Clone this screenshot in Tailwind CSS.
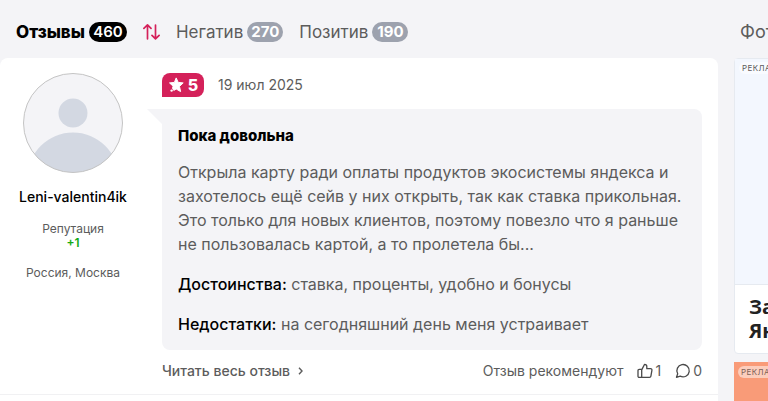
<!DOCTYPE html>
<html lang="ru">
<head>
  <meta charset="UTF-8">
  <meta name="viewport" content="width=device-width, initial-scale=1">
  <title>Отзывы</title>
  <script src="https://cdn.jsdelivr.net/npm/@tailwindcss/browser@4"></script>
</head>
<body class="min-h-screen bg-[#f4f4f7] font-['Inter','Liberation_Sans',sans-serif] text-[#5c5c5c]">

  <div class="flex min-h-screen gap-4">

    <!-- Reviews -->
    <main class="flex min-w-0 flex-1 flex-col">
      <nav class="flex h-[58px] items-center gap-4 pb-1 pt-2.5 pl-4 text-[17px] leading-6">
        <a href="#" class="flex items-center gap-1 font-extrabold text-black">Отзывы
          <span class="flex h-5 w-[38px] items-center justify-center rounded-full bg-black text-[15px] font-semibold text-white">460</span>
        </a>
        <button type="button" aria-label="Сортировка" class="flex w-[17px] justify-center">
          <svg class="h-4 w-[17px] shrink-0" viewBox="0 0 17 16" fill="none" stroke="#d4215a" stroke-width="1.7" stroke-linecap="round" stroke-linejoin="round">
            <path d="M4.500 14.800V1.200M.9 4.400l3.600-3.500L8 4.400M12.500 1v13.600M9 11.400l3.500 3.500 3.600-3.500"/>
          </svg>
        </button>
        <a href="#" class="flex items-center gap-1">Негатив
          <span class="flex h-5 w-9 items-center justify-center rounded-full bg-[#9da2ae] text-[15px] font-bold text-white">270</span>
        </a>
        <a href="#" class="flex items-center gap-1">Позитив
          <span class="flex h-5 w-9 items-center justify-center rounded-full bg-[#9da2ae] text-[15px] font-bold text-white">190</span>
        </a>
      </nav>

      <div class="flex-1 rounded-t-lg bg-white">
        <article class="flex gap-4 border-b border-[#f1f1f3] pb-3 pt-[15px] pr-4">

          <!-- Author -->
          <div class="flex w-[146px] shrink-0 flex-col items-center text-center text-xs leading-[14px]">
            <svg class="h-[100px] w-[100px]" viewBox="0 0 100 100">
              <defs><clipPath id="face"><circle cx="50" cy="50" r="49.5"/></clipPath></defs>
              <circle cx="50" cy="50" r="49.5" fill="#f4f4f7"/>
              <g clip-path="url(#face)" fill="#d3d8e2">
                <circle cx="50" cy="40" r="14.5"/>
                <circle cx="50" cy="105" r="45.500"/>
              </g>
              <circle cx="50" cy="50" r="49.5" fill="none" stroke="#c4c4c4" stroke-width="1"/>
            </svg>
            <a href="#" class="mt-3 text-sm leading-6 font-medium text-black">Leni-valentin4ik</a>
            <p class="mt-[13px]">Репутация</p>
            <p class="font-semibold text-[#14aa14]">+1</p>
            <p class="mt-4">Россия, Москва</p>
          </div>

          <div class="min-w-0 flex-1">
            <div class="flex h-6 items-center gap-3.5 text-sm">
              <span class="flex h-6 w-[42px] items-center justify-center gap-1 rounded-lg rounded-bl-none bg-[#d4215a] text-base font-extrabold text-white">
                <svg class="h-4 w-4" viewBox="0 0 16 16">
                  <path fill="#fff" stroke="#fff" stroke-width="1" stroke-linejoin="round" d="M8.200 .9l2 4.500 5 .5-3.700 3.500 1.100 5.200-4.400-2.600-2.400 1.400-1.300-2.200.6-2-3.600-3.300 4.900-.5z"/>
                  <circle cx="3.600" cy="13.600" r="1.200" fill="#fff"/>
                </svg>5</span>
              <time datetime="2025-07-19">19 июл 2025</time>
            </div>

            <!-- Bubble -->
            <div class="relative mt-3 rounded-lg rounded-tl-none bg-[#f4f4f7] px-4 pt-[15px] pb-3.5 text-base leading-6">
              <svg class="absolute top-0 -left-[15px] h-[15px] w-[15px]" viewBox="0 0 15 15"><path fill="#f4f4f7" d="M0 0h15v15z"/></svg>
              <h3 class="mb-3 text-[15px] leading-6 font-extrabold text-black">Пока довольна</h3>
              <p class="mb-4">Открыла карту ради оплаты продуктов экосистемы яндекса и<br>захотелось ещё сейв у них открыть, так как ставка прикольная.<br>Это только для новых клиентов, поэтому повезло что я раньше<br>не пользовалась картой, а то пролетела бы...</p>
              <p class="mb-4"><b class="font-medium text-black">Достоинства:</b> ставка, проценты, удобно и бонусы</p>
              <p><b class="font-medium text-black">Недостатки:</b> на сегодняшний день меня устраивает</p>
            </div>

            <div class="mt-2.5 flex items-center justify-between text-sm leading-[22px]">
              <a href="#" class="flex items-center gap-2 font-medium">Читать весь отзыв
                <svg class="h-2 w-[5px]" viewBox="0 0 5 8" fill="none" stroke="#5c5c5c" stroke-width="1.400"><path d="M1 .8L4 4 1 7.200"/></svg>
              </a>
              <div class="flex items-center">
                <span class="mr-3.5">Отзыв рекомендуют</span>
                <button type="button" class="mr-3.5 flex items-center gap-0.5">
                  <svg class="h-4 w-4" viewBox="0 0 16 16" fill="none" stroke="#4a4a4a" stroke-width="1.300" stroke-linejoin="round">
                    <path d="M4.700 14.400H2.200A1.200 1.200 0 0 1 1 13.200V7.500a1.200 1.200 0 0 1 1.200-1.200h2.500zM4.700 6.900L7.600 1.300c1.300 0 2.200.9 2.200 2.200v2.200h3.800c.9 0 1.500.8 1.300 1.600l-1 5.900c-.1.700-.7 1.200-1.400 1.200H4.700"/>
                  </svg>1</button>
                <button type="button" class="flex items-center gap-0.5">
                  <svg class="h-4 w-4" viewBox="0 0 16 16" fill="none" stroke="#4a4a4a" stroke-width="1.300" stroke-linejoin="round">
                    <path d="M1.500 14.300l1.200-3.500A6.200 6.200 0 1 1 5.200 13.200z"/>
                  </svg>0</button>
              </div>
            </div>
          </div>
        </article>
      </div>
    </main>

    <!-- Side column -->
    <aside class="w-[34px] shrink-0 overflow-hidden whitespace-nowrap">
      <h2 class="flex h-[58px] items-center pb-1 pt-2.5 pl-1.5 text-lg leading-6">Фото</h2>
      <div class="w-[240px] rounded-sm border border-[#e6eaf0] bg-white">
        <div class="h-[226px] border-b border-[#e6eaf0] bg-[#f3f7fe] pt-[3px] pl-1">
          <span class="block w-max rounded-full bg-white/50 px-[3px] text-[8px] leading-3 tracking-wider">РЕКЛАМА</span>
        </div>
        <p class="px-3.5 pt-2.5 pb-2.5 font-['Open_Sans','Noto_Sans',sans-serif] text-xl leading-6 font-bold text-[#222]">Заказ<br>Яндекс</p>
      </div>
      <div class="mt-2 h-10 w-[240px] bg-[#f99b78] pt-1 pl-1">
        <span class="block w-max rounded-full bg-white/50 px-[3px] text-[8px] leading-3 tracking-wider text-[#7d6258]">РЕКЛАМА</span>
      </div>
    </aside>

  </div>

</body>
</html>
